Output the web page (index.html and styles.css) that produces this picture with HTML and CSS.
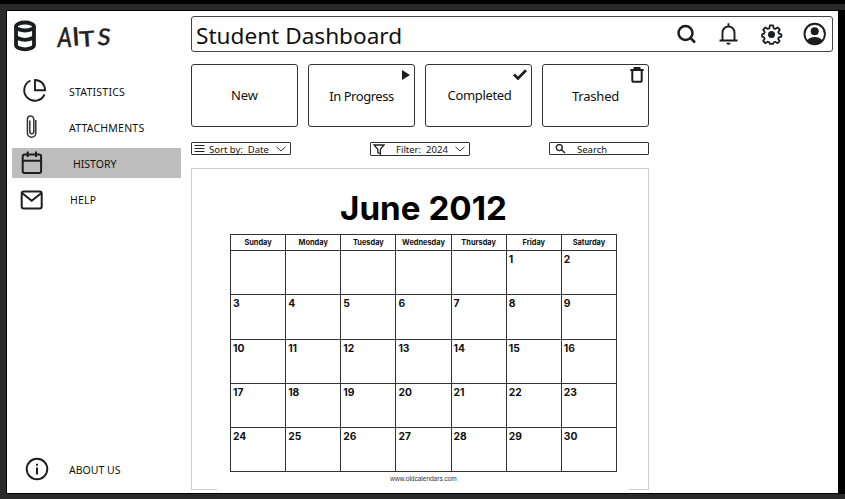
FILE: index.html
```html
<!DOCTYPE html>
<html lang="en">
<head>
<meta charset="utf-8">
<title>Student Dashboard</title>
<link rel="stylesheet" href="styles.css">
</head>
<body>
<div class="frame">
<div class="screen">
  <aside class="sidebar">
    <div class="brand">
      <svg class="logo" width="24" height="32" viewBox="0 0 24 32" fill="none" stroke="#1c1d1e" stroke-width="3.8"><ellipse cx="12" cy="6.500" rx="9" ry="4"/><path d="M3 6.500V25c0 2.500 4 4.300 9 4.300s9-1.800 9-4.300V6.500M3 15.500c0 2.500 4 4.300 9 4.300s9-1.800 9-4.300"/></svg>
      <div class="wordmark"><span>A</span><span>I</span><span>T</span><span>S</span></div>
    </div>
    <nav class="nav">
      <a class="item statistics"><svg width="26" height="26" viewBox="0 0 26 26" fill="none" stroke="#1c1d1e" stroke-width="1.900"><path d="M9.500 2.500A10.600 10.600 0 1 0 23.500 16.500M14 2v10.300h10C24 6 19.500 2 14 2z"/></svg><span>STATISTICS</span></a>
      <a class="item attachments"><svg width="26" height="26" viewBox="0 0 26 26" fill="none" stroke="#333" stroke-width="1.500" stroke-linecap="round"><path d="M16.800 6.500v12.500a4.200 4.200 0 0 1-8.400 0V5.200a3.200 3.200 0 0 1 6.400 0v12.600a2 2 0 0 1-4 0V7"/></svg><span>ATTACHMENTS</span></a>
      <a class="item history"><svg width="26" height="26" viewBox="0 0 26 26" fill="none" stroke="#1c1d1e" stroke-width="2"><rect x="3.700" y="4.400" width="18.400" height="18.600" rx="2"/><path d="M3.700 10.700h18.400M8.700 1.500v5.500M17 1.500v5.500"/></svg><span>HISTORY</span></a>
      <a class="item help"><svg width="26" height="26" viewBox="0 0 26 26" fill="none" stroke="#1c1d1e" stroke-width="2"><rect x="2.700" y="5.400" width="20" height="17.200" rx="2"/><path d="M3 7l9.700 7.800L22.500 7"/></svg><span>HELP</span></a>
    </nav>
    <a class="item about"><svg width="26" height="26" viewBox="0 0 26 26" fill="none" stroke="#1c1d1e" stroke-width="1.900"><circle cx="13" cy="13" r="10.300"/><path d="M13 11.500v7M13 7.800v2" stroke-width="2"/></svg><span>ABOUT US</span></a>
  </aside>
  <main class="main">
    <header class="topbar">
      <h1>Student Dashboard</h1>
      <div class="tools">
        <svg width="24" height="24" viewBox="0 0 24 24" fill="none" stroke="#1c1d22" stroke-width="2.500"><circle cx="11.500" cy="11" r="7"/><path d="M16.500 16l4.500 4.500"/></svg>
        <svg width="24" height="24" viewBox="0 0 24 24" fill="none" stroke="#1c1d22" stroke-width="1.900"><path d="M2.500 18.500h18M5.500 18.500v-8a6 6 0 0 1 12 0v8M11.500 1.200V5"/><path d="M9.300 20.700h4.400a2.200 2 0 0 1-4.400 0z" fill="#1c1d22" stroke="none"/></svg>
        <svg width="24" height="24" viewBox="0 0 24 24" fill="none" stroke="#1c1d22" stroke-width="1.800" stroke-linejoin="round"><path d="M9.900 3.300h3.200l.5 2.900 1.600.8 2.400-1.500 2.200 2.200-1.500 2.400.7 1.600 2.400.6v2.400l-2.600.7-.6 1.500 1.500 2.300-2.100 2-2.400-1.400-1.600.7-.6 1.400H9.900l-.6-1.500-1.600-.7-2.400 1.400-2.100-2.100 1.400-2.200-.6-1.500-1.900-.6v-2.400l2-.6.6-1.600-1.500-2.400 2.200-2.200L7.800 7l1.600-.8z"/><circle cx="11.500" cy="12.500" r="3.500" fill="#1c1d22" stroke="none"/></svg>
        <svg width="24" height="24" viewBox="0 0 24 24"><circle cx="11.700" cy="12" r="10.200" fill="#fff" stroke="#1c1d22" stroke-width="1.900"/><circle cx="11.700" cy="9.200" r="4" fill="#1c1d22"/><path d="M4 18.400C6.200 15.800 8.700 15 11.700 15s5.500.8 7.700 3.400A10.300 10.300 0 0 1 4 18.400z" fill="#1c1d22"/></svg>
      </div>
    </header>
    <section class="cards">
      <div class="card new">New</div>
      <div class="card progress">In Progress<svg class="mark" width="8" height="10" viewBox="0 0 8 10"><path d="M0 0l8 5-8 5z" fill="#1c1d22"/></svg></div>
      <div class="card completed">Completed<svg class="mark" width="14" height="11" viewBox="0 0 14 11"><path d="M1 5.500l4 4L13 1.200" fill="none" stroke="#1c1d1e" stroke-width="2.700"/></svg></div>
      <div class="card trashed">Trashed<svg class="mark" width="14" height="16" viewBox="0 0 14 16" fill="none" stroke="#1c1d1e" stroke-width="2"><path d="M.3 3h13.400M4.500 2V1h5v1"/><path d="M2.300 3v10.200c0 1 .7 1.600 1.500 1.600h6.400c.8 0 1.500-.6 1.500-1.600V3"/></svg></div>
    </section>
    <section class="controls">
      <div class="control sort"><svg width="11" height="9" viewBox="0 0 11 9"><path d="M.5 1.500h10M.5 4.500h10M.5 7.500h10" stroke="#222" stroke-width="1.100"/></svg><span class="label">Sort by:</span><span class="value">Date</span><svg class="chevron" width="10" height="6" viewBox="0 0 10 6"><path d="M.5 .8L5 5 9.500 .8" fill="none" stroke="#333"/></svg></div>
      <div class="control filter"><svg width="12" height="11" viewBox="0 0 12 11"><path d="M1 1h10L7.400 5.300V10L4.800 8.500V5.300z" fill="none" stroke="#222" stroke-width="1.300"/></svg><span class="label">Filter:</span><span class="value">2024</span><svg class="chevron" width="10" height="6" viewBox="0 0 10 6"><path d="M.5 .8L5 5 9.500 .8" fill="none" stroke="#333"/></svg></div>
      <div class="control search"><svg width="11" height="10" viewBox="0 0 11 10" fill="none" stroke="#222" stroke-width="1.400"><circle cx="4.300" cy="3.600" r="3"/><path d="M6.500 5.800L10 9"/></svg><span class="label">Search</span></div>
    </section>
    <section class="sheet">
      <h2>June 2012</h2>
      <table>
        <thead><tr><th>Sunday</th><th>Monday</th><th>Tuesday</th><th>Wednesday</th><th>Thursday</th><th>Friday</th><th>Saturday</th></tr></thead>
        <tbody>
          <tr><td></td><td></td><td></td><td></td><td></td><td>1</td><td>2</td></tr>
          <tr><td>3</td><td>4</td><td>5</td><td>6</td><td>7</td><td>8</td><td>9</td></tr>
          <tr><td>10</td><td>11</td><td>12</td><td>13</td><td>14</td><td>15</td><td>16</td></tr>
          <tr><td>17</td><td>18</td><td>19</td><td>20</td><td>21</td><td>22</td><td>23</td></tr>
          <tr><td>24</td><td>25</td><td>26</td><td>27</td><td>28</td><td>29</td><td>30</td></tr>
        </tbody>
      </table>
      <p class="source">www.oldcalendars.com</p>
    </section>
  </main>
</div>
</div>
</body>
</html>
```
FILE: styles.css
```css
* { box-sizing: border-box; }
body { margin: 0; background: #000; font-family: "Noto Sans", sans-serif; color: #111; overflow: hidden; }
svg { display: block; flex: none; }
.frame { width: 845px; height: 499px; padding: 4px 0 0; background: linear-gradient(#000 4px, transparent 4px) 0 0 / 845px 4px no-repeat, linear-gradient(#000, #000) 838px 10px / 7px 484px no-repeat, #2a2a2a; }
.screen { width: 833px; height: 484px; margin: 6px 0 0 6px; border: 1px solid #000; background: #fff; display: flex; }
.sidebar { width: 184px; display: flex; flex-direction: column; }
.brand { display: flex; height: 65px; padding: 9px 0 0 6px; }
.wordmark { display: flex; margin: 0 0 0 18px; font-family: Lato, sans-serif; font-size: 26px; line-height: 30px; font-weight: 500; color: #222; -webkit-text-stroke: .5px #222; }
.wordmark span:nth-child(1) { transform: translateY(2px) skewX(-4deg) scale(.8, 1.05); }
.wordmark span:nth-child(2) { transform: rotate(-4deg) scaleY(.95); }
.wordmark span:nth-child(3) { transform: translateY(1px) rotate(-4deg) scale(1, .82); }
.wordmark span:nth-child(4) { transform: skewX(-6deg) scale(.9, .88); }
.nav { display: flex; flex-direction: column; }
.item { display: flex; align-items: center; width: 169px; height: 30px; margin-left: 5px; padding-left: 9px; font-size: 10.500px; color: #111; }
.item + .item { margin-top: 6px; }
.item span { margin-left: 22px; padding-top: 2px; letter-spacing: .22px; }
.attachments { padding-left: 7px; }
.attachments span { margin-left: 24px; }
.history { background: #bdbdbd; padding-left: 7px; }
.history span { margin-left: 28px; letter-spacing: 0; }
.help { padding-left: 7px; }
.help span { margin-left: 25px; }
.about { margin-top: auto; margin-bottom: 9px; padding-left: 12px; }
.about span { margin-left: 19px; letter-spacing: 0; }
.main { width: 642px; display: flex; flex-direction: column; padding-top: 5px; }
.topbar { display: flex; align-items: center; justify-content: space-between; height: 36px; border: 1px solid #444; border-radius: 3px; padding: 0 5px 0 4px; }
.topbar h1 { margin: 3px 0 0; font-size: 22.600px; font-weight: 400; line-height: 34px; white-space: nowrap; }
.tools { display: flex; gap: 19px; }
.cards { display: grid; grid-template-columns: repeat(4, 107px); gap: 10px; width: 458px; height: 63px; margin-top: 12px; }
.card { position: relative; border: 1px solid #333; border-radius: 3px; display: flex; align-items: center; justify-content: center; font-size: 13px; line-height: 18px; letter-spacing: -.35px; white-space: nowrap; }
.new { letter-spacing: 0; padding-bottom: 2px; }
.progress { letter-spacing: -.45px; }
.trashed { letter-spacing: -.2px; }
.completed { padding: 0 0 2px 2px; }
.mark { position: absolute; top: 5px; right: 4px; }
.trashed .mark { top: 2px; }
.completed .mark { top: 4px; }
.controls { display: flex; justify-content: space-between; width: 458px; margin-top: 15px; height: 14px; }
.control { display: flex; align-items: center; width: 100px; height: 13px; border: 1px solid #333; border-radius: 1px; font-size: 9.500px; line-height: 12px; white-space: nowrap; }
.control span { padding-top: 2px; }
.sort { padding-left: 2px; }
.sort .label { margin-left: 4px; }
.sort .value { margin-left: 5px; }
.chevron { margin-left: auto; margin-right: 4px; }
.filter { height: 14px; padding-left: 2px; }
.filter .label { margin-left: 11px; }
.filter .value { margin-left: 5px; }
.search { padding-left: 5px; }
.search .label { margin-left: 11px; }
.sheet { width: 458px; height: 322px; margin-top: 12px; border: 1px solid #ccc; border-bottom: 0; background: linear-gradient(#ccc, #ccc) 0 100% / 25px 1px no-repeat, linear-gradient(#ccc, #ccc) 100% 100% / 19px 1px no-repeat; display: flex; flex-direction: column; padding-left: 38px; }
.sheet h2 { width: 387px; margin: 17px 0 0; font-family: Inter, sans-serif; font-size: 33.200px; font-weight: 700; line-height: 45px; height: 48px; text-align: center; color: #000; white-space: nowrap; }
table { width: 387px; border-collapse: collapse; table-layout: fixed; font-family: Inter, sans-serif; }
th, td { border: 1px solid #333; padding: 0; }
th { height: 16px; font-size: 7.400px; line-height: 10px; }
td { height: 44.300px; padding: 3px 0 0 2px; vertical-align: top; font-size: 10.300px; line-height: 11px; font-weight: 700; }
.source { width: 387px; margin: 3px 0 0; font-family: "Liberation Sans", Arial, sans-serif; font-size: 6.500px; line-height: 8px; text-align: center; color: #333; }
```
